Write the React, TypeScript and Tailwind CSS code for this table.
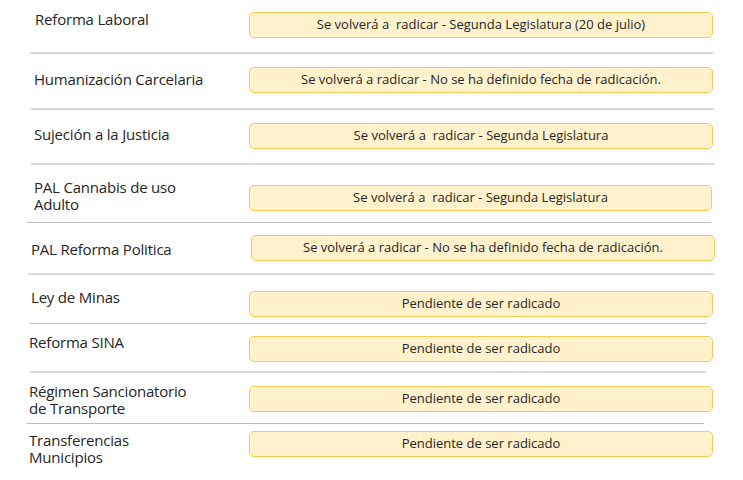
type Row = {
  label: string[];
  status: string;
  rowCls: string;
  labelCls: string;
  boxCls: string;
  sepCls?: string;
};

const rows: Row[] = [
  {
    label: ["Reforma Laboral"],
    status: "Se volverá a  radicar - Segunda Legislatura (20 de julio)",
    rowCls: "h-[52px]",
    labelCls: "pl-[35px] pt-[11px]",
    boxCls: "mt-[12px] ml-[249px] w-[464px]",
    sepCls: "ml-[30px] w-[683px] h-[2px] bg-[#d9d9d9]",
  },
  {
    label: ["Humanización Carcelaria"],
    status: "Se volverá a radicar - No se ha definido fecha de radicación.",
    rowCls: "h-[54px]",
    labelCls: "pl-[34px] pt-[17px]",
    boxCls: "mt-[13px] ml-[249px] w-[464px]",
    sepCls: "ml-[31px] w-[683px] h-[2px] bg-[#d9d9d9]",
  },
  {
    label: ["Sujeción a la Justicia"],
    status: "Se volverá a  radicar - Segunda Legislatura",
    rowCls: "h-[53px]",
    labelCls: "pl-[34px] pt-[16px]",
    boxCls: "mt-[13px] ml-[249px] w-[464px]",
    sepCls: "ml-[31px] w-[684px] h-[2px] bg-[#d9d9d9]",
  },
  {
    label: ["PAL Cannabis de uso", "Adulto"],
    status: "Se volverá a  radicar - Segunda Legislatura",
    rowCls: "h-[57px]",
    labelCls: "pl-[34px] pt-[14px]",
    boxCls: "mt-[20px] ml-[249px] w-[463px]",
    sepCls: "ml-[27px] w-[684px] h-[1px] bg-[#bfbfbf]",
  },
  {
    label: ["PAL Reforma Politica"],
    status: "Se volverá a radicar - No se ha definido fecha de radicación.",
    rowCls: "h-[50px]",
    labelCls: "pl-[31px] pt-[18px]",
    boxCls: "mt-[12px] ml-[251px] w-[464px]",
    sepCls: "ml-[28px] w-[686px] h-[2px] bg-[#d9d9d9]",
  },
  {
    label: ["Ley de Minas"],
    status: "Pendiente de ser radicado",
    rowCls: "h-[48px]",
    labelCls: "pl-[31px] pt-[14px]",
    boxCls: "mt-[16px] ml-[249px] w-[464px]",
    sepCls: "ml-[30px] w-[676px] h-[1px] bg-[#bfbfbf]",
  },
  {
    label: ["Reforma SINA"],
    status: "Pendiente de ser radicado",
    rowCls: "h-[47px]",
    labelCls: "pl-[29px] pt-[10px]",
    boxCls: "mt-[12px] ml-[249px] w-[464px]",
    sepCls: "ml-[30px] w-[676px] h-[2px] bg-[#d9d9d9]",
  },
  {
    label: ["Régimen Sancionatorio", "de Transporte"],
    status: "Pendiente de ser radicado",
    rowCls: "h-[50px]",
    labelCls: "pl-[29px] pt-[10px]",
    boxCls: "mt-[13px] ml-[249px] w-[464px]",
    sepCls: "ml-[27px] w-[677px] h-[1px] bg-[#bfbfbf]",
  },
  {
    label: ["Transferencias", "Municipios"],
    status: "Pendiente de ser radicado",
    rowCls: "h-[56px]",
    labelCls: "pl-[29px] pt-[8px]",
    boxCls: "mt-[7px] ml-[249px] w-[464px]",
  },
];

export default function App() {
  return (
    <div
      className="w-[743px] h-[480px] bg-white text-[#262626] overflow-hidden"
      style={{ fontFamily: '"Open Sans", "Noto Sans", sans-serif' }}
    >
      {rows.map((r, i) => (
        <div key={i}>
          <div className={`relative flex ${r.rowCls}`}>
            <div className={`absolute left-0 top-0 text-[15px] leading-[17px] tracking-[-0.2px] ${r.labelCls}`}>
              {r.label.map((l, j) => (
                <div key={j}>{l}</div>
              ))}
            </div>
            <div
              className={`h-[26px] flex items-center justify-center rounded-[5px] border-[1.5px] border-[#f6cb52] bg-[#fff2cc] text-[13px] whitespace-pre ${r.boxCls}`}
            >
              {r.status}
            </div>
          </div>
          {r.sepCls && <div className={r.sepCls} />}
        </div>
      ))}
    </div>
  );
}
